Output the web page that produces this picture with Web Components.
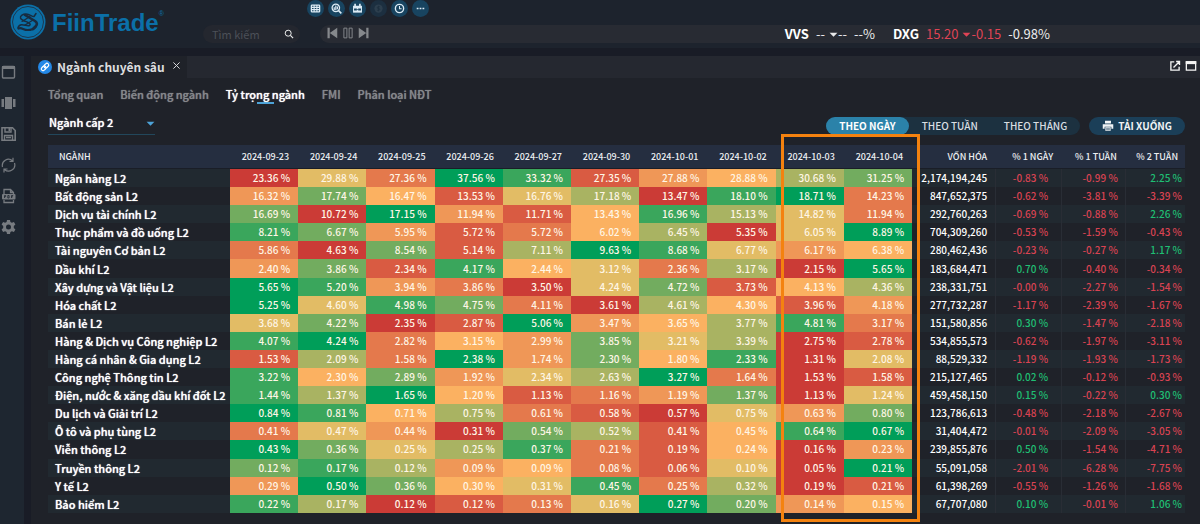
<!DOCTYPE html>
<html lang="vi">
<head>
<meta charset="utf-8">
<title>FiinTrade</title>
<style>
  body {
    margin: 0;
    min-height: 100vh;
    background: #191c26;
    color: #eceded;
    font: 12px/18px "Noto Sans CJK SC", "Noto Sans", sans-serif;
  }
</style>
</head>
<body>
<fiin-app></fiin-app>
<script>
const base = `<style>
  :host { display: block; box-sizing: border-box; }
  *, *::before, *::after { box-sizing: border-box; }
  button, input, select { font: inherit; color: inherit; background: none; border: 0; padding: 0; margin: 0; }
  button, select, a { cursor: pointer; }
  a { color: inherit; text-decoration: none; }
  svg { display: block; }
</style>`;

function define(name, html, setup) {
  const template = document.createElement('template');
  template.innerHTML = base + html;
  customElements.define(name, class extends HTMLElement {
    constructor() {
      super();
      this.attachShadow({ mode: 'open' }).append(template.content.cloneNode(true));
    }
    connectedCallback() { if (setup) setup(this, this.shadowRoot); }
  });
}

const icons = {
  grid: '<rect x="2" y="3" width="12" height="10" rx="1" fill="none" stroke="currentColor" stroke-width="1.9"/><path d="M2 6.3h12M2 9.7h12M6 3v10M10 3v10" stroke="currentColor" stroke-width="1.6"/>',
  zoomchart: '<circle cx="7" cy="7" r="5.4" fill="none" stroke="currentColor" stroke-width="1.9"/><path d="M11 11l4 4" stroke="currentColor" stroke-width="2.400"/><path d="M4.7 6v4M7 3.5v6.500M9.300 5v4" stroke="currentColor" stroke-width="1.700"/>',
  calendar: '<path d="M1.500 4h13v10h-13z" fill="currentColor"/><path d="M4.500 1v4M11.500 1v4" stroke="currentColor" stroke-width="2.400"/><path d="M3 8h4v3H3zM9 8h4v3H9z" fill="#184460"/><path d="M7 9.500h2" stroke="#184460"/>',
  coin: '<circle cx="8" cy="8" r="6" fill="currentColor"/><path d="M10 5.500H7.500a1.200 1.200 0 0 0 0 2.500h1a1.200 1.200 0 0 1 0 2.500H6M8 4v8" fill="none" stroke="#1d2f3f" stroke-width="1.200"/>',
  clock: '<circle cx="8" cy="8" r="6" fill="none" stroke="currentColor" stroke-width="2"/><path d="M8 4.500V8.500h3" fill="none" stroke="currentColor" stroke-width="1.500"/>',
  dots: '<path d="M2.500 6.800h2.600v2.400H2.500zM6.700 6.800h2.600v2.400H6.700zM10.900 6.800h2.600v2.400h-2.600z" fill="currentColor"/>',
  search: '<circle cx="6.700" cy="6.700" r="4.800" fill="none" stroke="currentColor" stroke-width="1.600"/><path d="M10.300 10.300L14.500 14.500" stroke="currentColor" stroke-width="1.900"/>',
  prev: '<path d="M2 1h3v14H2zM15 1v14L5 8z" fill="currentColor"/>',
  pause: '<path d="M2.500 1.500h4v13h-4zM9.500 1.500h4v13h-4z" fill="none" stroke="currentColor" stroke-width="1.300"/>',
  next: '<path d="M11 1h3v14h-3zM1 1v14l10-7z" fill="currentColor"/>',
  window: '<rect x="2.500" y="2.500" width="12" height="11.500" rx="1" fill="none" stroke="currentColor" stroke-width="1.400"/><path d="M2 2h13v3H2z" fill="currentColor"/>',
  carousel: '<path d="M5 2h7v12H5zM1.500 4h2.500v8H1.500zM13 4h2.500v8H13z" fill="currentColor"/>',
  save: '<path d="M2 1.800h10.500l2.700 2.700v9.700H2z" fill="none" stroke="currentColor" stroke-width="1.600"/><path d="M5 2v4h6V2M4.500 14V9.500h8V14M6 11.500h5" fill="none" stroke="currentColor" stroke-width="1.400"/><path d="M8.500 2h1.500v3H8.500z" fill="currentColor"/>',
  refresh: '<path d="M2.500 10A6.200 6.200 0 0 1 12.500 3.800M14.500 6A6.200 6.200 0 0 1 4.500 12.500M13 .8v3.500H9.500M4 15.500V12h3.500" fill="none" stroke="currentColor" stroke-width="1.200"/>',
  pdf: '<path d="M4 6V1.500h6.500L13.500 4.500V6M4 12v2.500h9.500V12M10.500 1.500v3h3" fill="none" stroke="currentColor" stroke-width="1.300"/><rect x="2" y="6" width="13.500" height="5.600" rx="1" fill="currentColor"/><path d="M4.500 10V7.500h1.200v1.200H4.500M7.800 7.500v2.500h1.300V7.500zM11.500 10V7.500h1.700M11.500 8.800h1.400" fill="none" stroke="#1e2630" stroke-width=".8"/>',
  gear: '<path fill="currentColor" fill-rule="evenodd" d="M7 1h3l.4 2 1.500.8 2-.8 1.500 2.600-1.600 1.400v2l1.600 1.400-1.500 2.600-2-.8-1.500.8L10 15H7l-.4-2-1.500-.8-2 .8-1.500-2.600L3.200 9V7L1.600 5.600 3.100 3l2 .8L6.600 3zM8.500 5.500a2.500 2.500 0 1 0 0 5 2.500 2.500 0 0 0 0-5z"/>',
  close: '<path d="M2.500 2.500l11 11M13.500 2.500l-11 11" stroke="currentColor" stroke-width="1.700"/>',
  link: '<circle cx="8" cy="8" r="8" fill="#2488e6"/><g fill="none" stroke="#fff" stroke-width="1.300" transform="rotate(-45 8 8)"><rect x="2.800" y="6" width="6" height="4" rx="2"/><rect x="7.200" y="6" width="6" height="4" rx="2"/></g>',
  popout: '<path d="M7 2.500H2.500v11h11V9M9.500 2h4.500v4.500M14 2L6 10" fill="none" stroke="currentColor" stroke-width="1.800"/>',
  maximize: '<rect x="1.800" y="2.500" width="12.400" height="11" fill="none" stroke="currentColor" stroke-width="1.700"/><path d="M1 1.500h14v4H1z" fill="currentColor"/>',
  print: '<path d="M4 1h8v3.500H4zM1 5.500h14v6h-2.500V9h-9v2.500H1z" fill="currentColor"/><path d="M4.500 9.500h7v5h-7z" fill="currentColor"/><path d="M5.500 11h5M5.500 13h5" stroke="#1b3f58" stroke-width=".9"/>',
  caret: '<path d="M1 5h14L8 12z" fill="currentColor"/>'
};

define('fiin-icon', `<style>
  :host { display: inline-block; width: var(--size, 16px); height: var(--size, 16px); flex: none; }
</style><svg viewBox="0 0 16 16" width="100%" height="100%" aria-hidden="true"></svg>`,
  (el, root) => { root.querySelector('svg').innerHTML = icons[el.getAttribute('name')] || ''; });

define('round-button', `<style>
  :host { display: inline-block; --size: 11px; }
  button { display: grid; place-items: center; width: 17px; height: 17px; border-radius: 50%; background: #184460; color: #dcebf5; }
  button:disabled { background: #1c2f40; color: #2d3f4e; cursor: default; }
</style><button type="button"><slot></slot></button>`,
  (el, root) => {
    const b = root.querySelector('button');
    b.setAttribute('aria-label', el.getAttribute('label'));
    b.disabled = el.hasAttribute('disabled');
  });

define('brand-logo', `<style>
  a { display: flex; align-items: flex-start; gap: 6px; color: #0b70a8; }
  .name { display: flex; font: bold 24px/36px "Liberation Sans", Arial, sans-serif; padding-top: 1px; }
  sup { font: 7px/18px "Liberation Sans", Arial, sans-serif; }
</style>
<a href="#">
  <svg width="36" height="36" viewBox="0 0 36 36" aria-hidden="true">
    <circle cx="18" cy="18" r="17.500" fill="#0b70a8"/>
    <circle cx="18" cy="18" r="15.500" fill="none" stroke="#1b3850" stroke-width="1"/>
    <g fill="none" stroke="#182c40" stroke-linecap="round" stroke-linejoin="round">
      <path d="M15 11l10 6c2 1.500 2.500 3 1 5l-3 3" stroke-width="2.600"/>
      <path d="M26 9.500l-2 3c-2 .5-4-2.500-8-2.500-3 0-6 1.500-5.500 4 .5 2 4 3 7 4.200 2.500 1 3.500 2.300 2 3.300-2 1-5-1-8-.8-2 .2-3 1.500-3.500 3" stroke-width="1.500"/>
      <path d="M8.500 24.500c3-1.500 5 1.500 9 1.500 3 0 6-.5 8-3" stroke-width="2.200"/>
      <path d="M12 17.500l8-5M15 21l8-5" stroke-width="1.100"/>
    </g>
  </svg>
  <span class="name">FiinTrade<sup>®</sup></span>
</a>`);

define('search-box', `<style>
  label { display: flex; align-items: center; width: 97px; height: 18px; padding: 0 6px 0 9px; border-radius: 9px; background: #24272f; --size: 10px; }
  input { flex: 1; min-width: 0; font-size: 11px; outline: 0; }
  input::placeholder { color: #4c5058; opacity: 1; }
</style>
<label><input type="text" placeholder="Tìm kiếm" aria-label="Tìm kiếm"><fiin-icon name="search"></fiin-icon></label>`);

define('ticker-quote', `<style>
  :host { display: flex; align-items: center; font-size: 13px; line-height: 18px; --size: 9px; }
  b { margin-right: 7px; color: #fff; }
  .move { display: flex; align-items: center; margin-right: 7px; color: #e8e8ea; }
  :host([down]) .move { color: #df4355; }
  .price { margin-right: 4px; }
</style>
<b><slot></slot></b><span class="move"><span class="price"></span><fiin-icon name="caret"></fiin-icon><span class="diff"></span></span><span class="pct"></span>`,
  (el, root) => {
    for (const k of ['price', 'diff', 'pct']) root.querySelector('.' + k).textContent = el.getAttribute(k);
  });

define('ticker-bar', `<style>
  :host { flex: 1; }
  .bar { display: flex; align-items: center; height: 18px; padding: 0 150px 0 6px; border-radius: 9px 0 0 9px; background: #282b33; }
  .controls { display: flex; gap: 4px; color: #85888c; --size: 12px; flex: 1; }
  .quotes { display: flex; gap: 18px; }
</style>
<div class="bar">
  <div class="controls">
    <button type="button" aria-label="Trước"><fiin-icon name="prev"></fiin-icon></button>
    <button type="button" aria-label="Tạm dừng"><fiin-icon name="pause"></fiin-icon></button>
    <button type="button" aria-label="Sau"><fiin-icon name="next"></fiin-icon></button>
  </div>
  <div class="quotes"><slot></slot></div>
</div>`);

define('app-header', `<style>
  header { display: grid; grid-template-columns: 203px 1fr; height: 48px; background: #1d232d; }
  brand-logo { padding: 4px 0 0 10px; }
  .tools { display: flex; gap: 4px; height: 25px; padding-left: 104px; }
  .line { display: flex; gap: 20px; }
</style>
<header>
  <brand-logo></brand-logo>
  <div>
    <div class="tools">
      <round-button label="Bảng giá"><fiin-icon name="grid"></fiin-icon></round-button>
      <round-button label="Phân tích"><fiin-icon name="zoomchart"></fiin-icon></round-button>
      <round-button label="Lịch"><fiin-icon name="calendar"></fiin-icon></round-button>
      <round-button label="Giao dịch" disabled><fiin-icon name="coin"></fiin-icon></round-button>
      <round-button label="Lịch sử"><fiin-icon name="clock"></fiin-icon></round-button>
      <round-button label="Khác"><fiin-icon name="dots"></fiin-icon></round-button>
    </div>
    <div class="line">
      <search-box></search-box>
      <ticker-bar>
        <ticker-quote price="--" diff="--" pct="--%">VVS</ticker-quote>
        <ticker-quote price="15.20" diff="-0.15" pct="-0.98%" down>DXG</ticker-quote>
      </ticker-bar>
    </div>
  </div>
</header>`);

define('side-rail', `<style>
  nav { display: flex; flex-direction: column; gap: 15px; height: 100%; padding: 8px 0 0 0; background: #1e2630; color: #777b80; }
  button { display: block; width: 16px; height: 16px; }
</style>
<nav aria-label="Công cụ">
  <button type="button" aria-label="Cửa sổ"><fiin-icon name="window"></fiin-icon></button>
  <button type="button" aria-label="Bố cục"><fiin-icon name="carousel"></fiin-icon></button>
  <button type="button" aria-label="Lưu"><fiin-icon name="save"></fiin-icon></button>
  <button type="button" aria-label="Làm mới"><fiin-icon name="refresh"></fiin-icon></button>
  <button type="button" aria-label="Xuất PDF"><fiin-icon name="pdf"></fiin-icon></button>
  <button type="button" aria-label="Cài đặt"><fiin-icon name="gear"></fiin-icon></button>
</nav>`);

define('panel-titlebar', `<style>
  .bar { display: flex; justify-content: space-between; height: 22px; background: #252830; }
  .tab { display: flex; align-items: center; gap: 5px; padding: 0 4px 0 7px; background: #1f2229; color: #dcdddf; --size: 14px; }
  h1 { margin: 0; font-size: 12px; line-height: 22px; font-weight: 700; }
  .tab button { --size: 9px; padding: 0 2px 4px; }
  .actions { display: flex; align-items: center; gap: 4px; padding-right: 3px; color: #f4f4f4; --size: 12px; }
</style>
<div class="bar">
  <div class="tab"><fiin-icon name="link"></fiin-icon><h1><slot></slot></h1><button type="button" aria-label="Đóng"><fiin-icon name="close"></fiin-icon></button></div>
  <div class="actions">
    <button type="button" aria-label="Mở cửa sổ mới"><fiin-icon name="popout"></fiin-icon></button>
    <button type="button" aria-label="Phóng to"><fiin-icon name="maximize"></fiin-icon></button>
  </div>
</div>`);

define('section-tabs', `<style>
  nav { display: flex; align-items: center; gap: 17px; height: 32px; font-size: 11px; line-height: 20px; font-weight: 500; color: #85878b; text-shadow: 0 0 1px currentColor; }
  ::slotted(a[aria-current]) {
    color: #fff !important;
    background: linear-gradient(#4da3d8, #4da3d8) center bottom / 17px 2px no-repeat;
  }
</style><nav><slot></slot></nav>`);

define('level-select', `<style>
  :host { position: relative; width: 107px; --size: 9px; }
  select { appearance: none; display: block; width: 100%; height: 25px; padding: 0 18px 0 1px; font-size: 11px; font-weight: 500; color: #fff; text-shadow: 0 0 1px currentColor; border-bottom: 1px solid #22475b; outline: 0; }
  option { color: #000; }
  fiin-icon { position: absolute; right: 0; top: 9px; color: #4da3d8; pointer-events: none; }
</style>
<select aria-label="Cấp ngành"><option>Ngành cấp 2</option></select><fiin-icon name="caret"></fiin-icon>`);

define('period-switch', `<style>
  div { display: flex; border-radius: 9px; background: #1c3140; }
  button { height: 18px; padding: 0 13px; border-radius: 9px; font-size: 10px; line-height: 18px; font-weight: 500; color: #d9dee2; }
  button[aria-pressed=true] { background: #2b82a9; color: #fff; font-weight: 700; }
</style>
<div role="group" aria-label="Chu kỳ">
  <button type="button" aria-pressed="true">THEO NGÀY</button>
  <button type="button" aria-pressed="false">THEO TUẦN</button>
  <button type="button" aria-pressed="false">THEO THÁNG</button>
</div>`);

define('download-button', `<style>
  :host { --size: 12px; }
  button { display: flex; align-items: center; gap: 4px; height: 18px; padding: 0 13px; border-radius: 9px; background: #1b3f58; font-size: 10px; line-height: 18px; font-weight: 700; color: #f0f3f5; }
</style><button type="button"><fiin-icon name="print"></fiin-icon><slot></slot></button>`);

const dates = ['2024-09-23', '2024-09-24', '2024-09-25', '2024-09-26', '2024-09-27', '2024-09-30', '2024-10-01', '2024-10-02', '2024-10-03', '2024-10-04'];

/* name | daily share | heat level of each day (0 lowest, 9 highest) | market cap | 1 day, 1 week, 2 weeks */
const sectors = `
Ngân hàng L2|23.36 29.88 27.36 37.56 33.32 27.35 27.88 28.88 30.68 31.25|0529813467|2,174,194,245|-0.83 -0.99 2.25
Bất động sản L2|16.32 17.74 16.47 13.53 16.76 17.18 13.47 18.10 18.71 14.23|3741560892|847,652,375|-0.62 -3.81 -3.39
Dịch vụ tài chính L2|16.69 10.72 17.15 11.94 11.71 13.43 16.96 15.13 14.82 11.94|7093148652|292,760,263|-0.69 -0.88 2.26
Thực phẩm và đồ uống L2|8.21 6.67 5.95 5.72 5.72 6.02 6.45 5.35 6.05 8.89|8731246059|704,309,260|-0.53 -1.59 -0.43
Tài nguyên Cơ bản L2|5.86 4.63 8.54 5.14 7.11 9.63 8.68 6.77 6.17 6.38|2071698534|280,462,436|-0.23 -0.27 1.17
Dầu khí L2|2.40 3.86 2.34 4.17 2.44 3.12 2.36 3.17 2.15 5.65|3718452609|183,684,471|0.70 -0.40 -0.34
Xây dựng và Vật liệu L2|5.65 5.20 3.94 3.86 3.50 4.24 4.72 3.73 4.13 4.36|9832057146|238,331,751|-0.00 -2.27 -1.54
Hóa chất L2|5.25 4.60 4.98 4.75 4.11 3.61 4.61 4.30 3.96 4.18|9587206413|277,732,287|-1.17 -2.39 -1.67
Bán lẻ L2|3.68 4.22 2.35 2.87 5.06 3.47 3.65 3.77 4.81 3.17|5701934682|151,580,856|0.30 -1.47 -2.18
Hàng &amp; Dịch vụ Công nghiệp L2|4.07 4.24 2.82 3.15 2.99 3.85 3.21 3.39 2.75 2.78|8924375601|534,855,573|-0.62 -1.97 -3.11
Hàng cá nhân &amp; Gia dụng L2|1.53 2.09 1.58 2.38 1.74 2.30 1.80 2.33 1.31 2.08|1629374805|88,529,332|-1.19 -1.93 -1.73
Công nghệ Thông tin L2|3.22 2.30 2.89 1.92 2.34 2.63 3.27 1.64 1.53 1.58|8473569201|215,127,465|0.02 -0.12 -0.93
Điện, nước &amp; xăng dầu khí đốt L2|1.44 1.37 1.65 1.20 1.13 1.16 1.19 1.37 1.13 1.24|8694123705|459,458,150|0.15 -0.22 0.30
Du lịch và Giải trí L2|0.84 0.81 0.71 0.75 0.61 0.58 0.57 0.75 0.63 0.80|9846210537|123,786,613|-0.48 -2.18 -2.67
Ô tô và phụ tùng L2|0.41 0.47 0.44 0.31 0.54 0.52 0.41 0.45 0.64 0.67|2530761489|31,404,472|-0.01 -2.09 -3.05
Viễn thông L2|0.43 0.36 0.25 0.25 0.37 0.21 0.19 0.24 0.16 0.23|9756821403|239,855,876|0.50 -1.54 -4.71
Truyền thông L2|0.12 0.17 0.12 0.09 0.09 0.08 0.06 0.10 0.05 0.21|7863421509|55,091,058|-2.01 -6.28 -7.75
Y tế L2|0.29 0.50 0.36 0.30 0.31 0.45 0.25 0.32 0.19 0.21|3974582601|61,398,269|-0.55 -1.26 -1.68
Bảo hiểm L2|0.22 0.17 0.12 0.12 0.13 0.16 0.27 0.20 0.14 0.15|8601259734|67,707,080|0.10 -0.01 1.06`.trim().split('\n').map(line => line.split('|'));

const heat = ['#cb3b36', '#d95b42', '#e4794c', '#ef9757', '#fbb161', '#e2bc65', '#a9b362', '#72ac5f', '#3aa65c', '#009e59'];

define('sector-table', `<style>
  :host { position: relative; }
  table { width: 100%; height: 368px; table-layout: fixed; border-collapse: separate; border-spacing: 0; font-size: 11px; line-height: 18px; }
  col.name { width: 16%; } col.day { width: 6%; } col.cap { width: 7.4%; }
  col.d1 { width: 5.8%; } col.w1 { width: 5.6%; } col.w2 { width: 5.2%; }
  th, td { padding: 0 8px 0 0; text-align: right; white-space: nowrap; }
  thead th { height: 24px; padding-right: 9px; background: #252e40; border-bottom: 1px solid #1a1e27; font-size: 9px; font-weight: 500; color: #eceef2; }
  thead th:first-child { padding-left: 11px; text-align: left; }
  tbody th { padding: 0 0 0 7px; text-align: left; font-weight: 500; color: #fff; text-shadow: 0 0 1px currentColor; }
  tbody tr:nth-child(odd) { background: #212930; }
  tbody tr:nth-child(even) { background: #1f2229; }
  td { font-size: 10px; font-weight: 500; }
  td.heat { color: #fff6e6; }
  td.cap { color: #fff; }
  td.cap, td.d1, td.w1 { border-right: 1px solid #292d35; }
  td.up { color: #1fbf73; } td.down { color: #d94352; }
  td.d1 { padding-right: 13px; } td.w1 { padding-right: 7px; } td.w2 { padding-right: 3px; }
  thead th.w2 { padding-right: 7px; }
  .cap span { display: flex; justify-content: flex-end; }
  .focus { position: absolute; top: -11px; bottom: -9px; left: 64.5%; width: 12.2%; border: 3px solid #f4820f; pointer-events: none; }
${heat.map((c, i) => `  .h${i} { background: ${c}; }`).join('\n')}
</style>
<table>
  <colgroup><col class="name">${'<col class="day">'.repeat(10)}<col class="cap"><col class="d1"><col class="w1"><col class="w2"></colgroup>
  <thead><tr><th scope="col">NGÀNH</th>${dates.map(d => `<th scope="col">${d}</th>`).join('')}<th scope="col">VỐN HÓA</th><th scope="col">% 1 NGÀY</th><th scope="col">% 1 TUẦN</th><th scope="col" class="w2">% 2 TUẦN</th></tr></thead>
  <tbody>${sectors.map(([name, shares, levels, cap, changes]) => `<tr><th scope="row">${name}</th>${
    shares.split(' ').map((v, i) => `<td class="heat h${levels[i]}">${v} %</td>`).join('')
  }<td class="cap"><span>${cap}</span></td>${
    changes.split(' ').map((v, i) => `<td class="${['d1', 'w1', 'w2'][i]} ${v.startsWith('-') ? 'down' : 'up'}">${v} %</td>`).join('')
  }</tr>`).join('')}</tbody>
</table>
<div class="focus"></div>`);

define('sector-panel', `<style>
  :host { background: #1f2229; }
  .content { padding: 0 15px 11px 17px; }
  .toolbar { display: flex; align-items: flex-end; gap: 9px; margin-bottom: 10px; }
  level-select { margin-right: auto; }
</style>
<panel-titlebar>Ngành chuyên sâu</panel-titlebar>
<div class="content">
  <section-tabs>
    <a href="#tong-quan">Tổng quan</a>
    <a href="#bien-dong">Biến động ngành</a>
    <a href="#ty-trong" aria-current="page">Tỷ trọng ngành</a>
    <a href="#fmi">FMI</a>
    <a href="#phan-loai">Phân loại NĐT</a>
  </section-tabs>
  <div class="toolbar">
    <level-select></level-select>
    <period-switch></period-switch>
    <download-button>TẢI XUỐNG</download-button>
  </div>
  <sector-table></sector-table>
</div>`);

define('fiin-app', `<style>
  :host { display: flex; flex-direction: column; min-height: 100vh; }
  .body { display: grid; grid-template-columns: 24px minmax(0, 1fr); column-gap: 7px; flex: 1; margin-top: 8px; }
</style>
<app-header></app-header>
<div class="body"><side-rail></side-rail><sector-panel></sector-panel></div>`);
</script>
</body>
</html>
